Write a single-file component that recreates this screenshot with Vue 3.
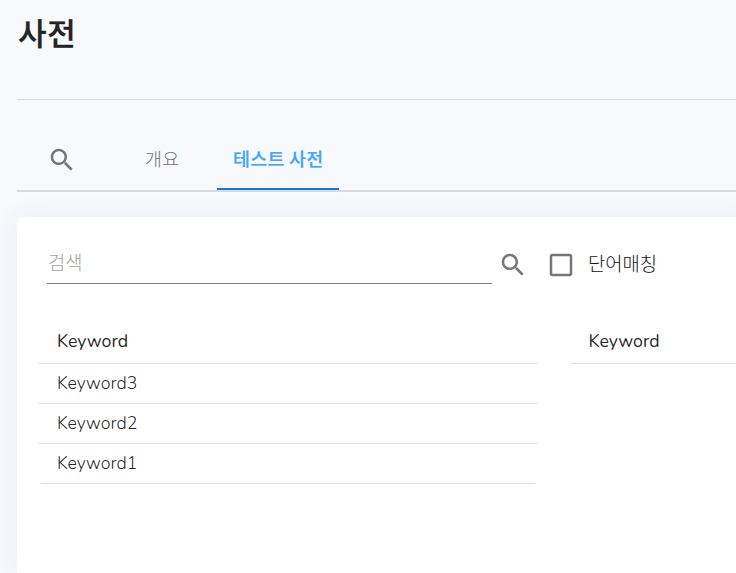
<script setup>
import { ref } from 'vue'

const tabs = ['개요', '테스트 사전']
const activeTab = ref('테스트 사전')
const keywords = ['Keyword3', 'Keyword2', 'Keyword1']
const matchWord = ref(false)
</script>

<template>
  <main class="page">
    <header class="page-header">
      <h1 class="title">사전</h1>
    </header>

    <nav class="tabs">
      <button class="tab-search" aria-label="검색">
        <svg class="icon" viewBox="0 0 24 24"><path d="M15.5 14h-.79l-.28-.27C15.41 12.59 16 11.11 16 9.5 16 5.91 13.09 3 9.5 3S3 5.91 3 9.5 5.91 16 9.5 16c1.61 0 3.09-.59 4.23-1.57l.27.28v.79l5 4.99L20.49 19l-4.99-5zm-6 0C7.01 14 5 11.99 5 9.5S7.01 5 9.5 5 14 7.01 14 9.5 11.99 14 9.5 14z" /></svg>
      </button>
      <button
        v-for="tab in tabs"
        :key="tab"
        class="tab"
        :class="{ active: tab === activeTab }"
        @click="activeTab = tab"
      ><span class="tab-label">{{ tab }}</span></button>
    </nav>

    <section class="card">
      <div class="toolbar">
        <input class="field" type="text" placeholder="검색" />
        <button class="search-button" aria-label="검색">
          <svg class="icon" viewBox="0 0 24 24"><path d="M15.5 14h-.79l-.28-.27C15.41 12.59 16 11.11 16 9.5 16 5.91 13.09 3 9.5 3S3 5.91 3 9.5 5.91 16 9.5 16c1.61 0 3.09-.59 4.23-1.57l.27.28v.79l5 4.99L20.49 19l-4.99-5zm-6 0C7.01 14 5 11.99 5 9.5S7.01 5 9.5 5 14 7.01 14 9.5 11.99 14 9.5 14z" /></svg>
        </button>
        <button class="check" @click="matchWord = !matchWord">
          <svg class="icon" viewBox="0 0 24 24">
            <path v-if="matchWord" d="M19 3H5c-1.11 0-2 .9-2 2v14c0 1.1.89 2 2 2h14c1.11 0 2-.9 2-2V5c0-1.1-.89-2-2-2zm-9 14l-5-5 1.41-1.41L10 14.17l7.59-7.59L19 8l-9 9z" />
            <path v-else d="M19 5v14H5V5h14m0-2H5c-1.1 0-2 .9-2 2v14c0 1.1.9 2 2 2h14c1.1 0 2-.9 2-2V5c0-1.1-.9-2-2-2z" />
          </svg>
          <span class="check-label">단어매칭</span>
        </button>
      </div>

      <div class="tables">
        <div class="table">
          <div class="head"><span>Keyword</span></div>
          <div v-for="word in keywords" :key="word" class="row"><span>{{ word }}</span></div>
        </div>
        <div class="table second">
          <div class="head"><span>Keyword</span></div>
        </div>
      </div>
    </section>
  </main>
</template>

<style>
body {
  background: #f8f9fd;
  overflow: hidden;
}
</style>

<style scoped>
.page {
  box-sizing: border-box;
  height: 573px;
  padding-left: 17px;
  overflow: hidden;
  background: #f8f9fd;
  color: rgba(0, 0, 0, 0.87);
  font-family: 'Noto Sans CJK KR', sans-serif;
  display: flex;
  flex-direction: column;
}
button {
  border: 0;
  padding: 0;
  margin: 0;
  background: none;
  font: inherit;
  color: inherit;
}
.icon {
  display: block;
  width: 30px;
  height: 30px;
  fill: #757575;
  flex: none;
}
.page-header {
  box-sizing: border-box;
  height: 100px;
  padding-top: 9px;
  border-bottom: 1px solid #d9dadd;
}
.title {
  margin: 0 0 0 1px;
  font-size: 31px;
  line-height: 46px;
  letter-spacing: 0.8px;
  font-weight: 500;
  -webkit-text-stroke: 0.4px currentColor;
}
.tabs {
  box-sizing: border-box;
  height: 92px;
  padding-top: 26px;
  border-bottom: 2px solid #d9dadd;
  display: flex;
}
.tab-search {
  padding: 19px 0 15px 30px;
  width: 94px;
}
.tab {
  box-sizing: border-box;
  height: 64px;
  width: 106px;
  padding: 2px 0 0 34px;
  font-size: 18.4px;
  letter-spacing: 0.3px;
  font-weight: 300;
  line-height: 26px;
  text-align: left;
  white-space: nowrap;
  color: #70757a;
  border-bottom: 2px solid transparent;
}
.tab.active {
  width: 122px;
  padding-left: 16px;
  font-weight: 500;
  -webkit-text-stroke: 0.2px currentColor;
  color: #42a5ff;
  border-bottom-color: #1976d2;
}
.card {
  flex: 1;
  margin-top: 25px;
  margin-right: -20px;
  border-radius: 5px 0 0 0;
  background: #fff;
  box-shadow: 0 0 28px rgba(55, 75, 115, 0.07);
}
.toolbar {
  padding: 25px 0 0 30px;
  display: flex;
  height: 42px;
}
.field {
  box-sizing: border-box;
  width: 445px;
  height: 42px;
  border: 0;
  border-bottom: 1px solid #808080;
  padding: 0 1px 3px;
  font-family: inherit;
  font-size: 18.8px;
  font-weight: 300;
  background: none;
  outline: none;
}
.field::placeholder {
  color: #a2a2a2;
  opacity: 1;
}
.search-button {
  height: 30px;
  margin: 8px 0 0 6px;
}
.check {
  height: 30px;
  margin: 8px 0 0 18px;
  display: flex;
  align-items: center;
}
.check-label {
  margin-left: 12px;
  padding-bottom: 4px;
  font-size: 18.8px;
  line-height: 26px;
  font-weight: 300;
  color: #111;
}
.tables {
  padding: 35px 0 0 20.5px;
  display: flex;
  gap: 33px;
  font-family: Nunito, 'Open Sans', sans-serif;
  font-size: 17.8px;
}
.table {
  box-sizing: border-box;
  width: 500px;
  flex: none;
}
.head,
.row {
  box-sizing: border-box;
  height: 40px;
  padding-left: 19.5px;
  border-bottom: 1px solid #dfdfdf;
  line-height: 38px;
}
.head {
  height: 45px;
  line-height: 45px;
}
.row {
  font-weight: 300;
}
.row:last-child {
  margin: 0 3px;
  padding-left: 16.5px;
}
.second .head {
  padding-left: 18px;
}
</style>
